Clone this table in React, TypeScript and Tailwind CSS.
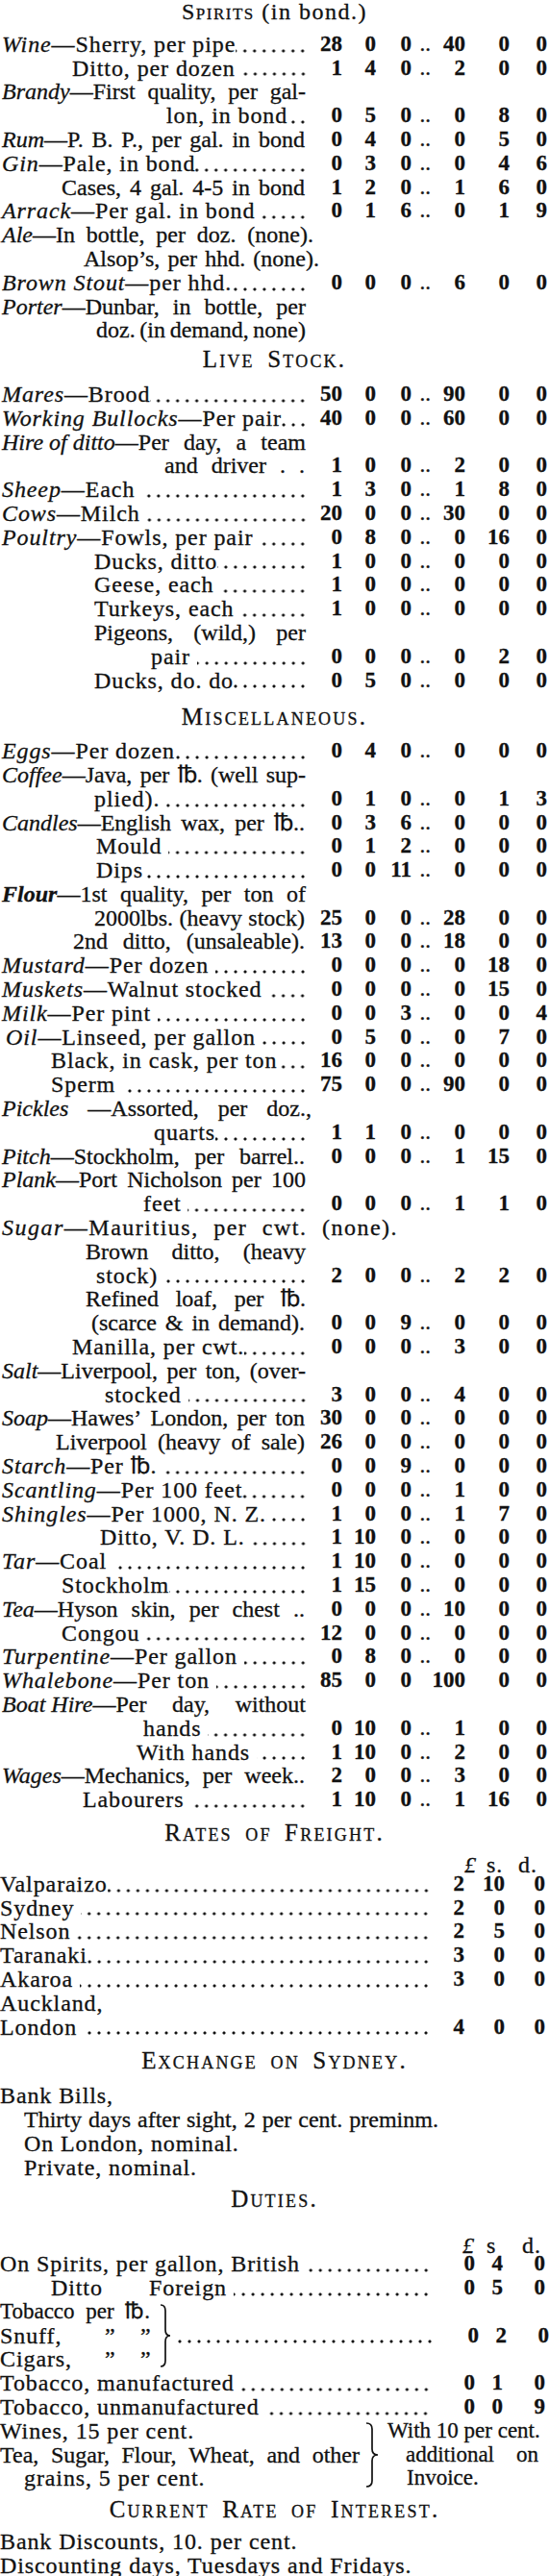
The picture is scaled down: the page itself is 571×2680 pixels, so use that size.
import React from "react";

type R = {
  k: "n" | "j" | "p";
  h?: string;
  t: string;
  ind?: string;
  w?: string;
  lead?: boolean;
  n?: string[];
  nosep?: boolean;
  bi?: boolean;
};

const spirits: R[] = [
  { k: "n", h: "Wine", t: "—Sherry, per pipe", lead: true, n: ["28", "0", "0", "40", "0", "0"] },
  { k: "n", ind: "pl-[75px]", t: "Ditto, per dozen ", lead: true, n: ["1", "4", "0", "2", "0", "0"] },
  { k: "j", h: "Brandy", t: "—First quality, per gal-" },
  { k: "n", ind: "pl-[173px]", t: "lon, in bond", lead: true, n: ["0", "5", "0", "0", "8", "0"] },
  { k: "n", h: "Rum", t: "—P. B. P., per gal. in bond", n: ["0", "4", "0", "0", "5", "0"] },
  { k: "n", h: "Gin", t: "—Pale, in bond", lead: true, n: ["0", "3", "0", "0", "4", "6"] },
  { k: "n", ind: "pl-[64px]", t: "Cases, 4 gal. 4-5 in bond", n: ["1", "2", "0", "1", "6", "0"] },
  { k: "n", h: "Arrack", t: "—Per gal. in bond ", lead: true, n: ["0", "1", "6", "0", "1", "9"] },
  { k: "j", h: "Ale", t: "—In bottle, per doz. (none).", w: "w-[326px]" },
  { k: "j", ind: "pl-[87px]", t: "Alsop’s, per hhd. (none).", w: "w-[332px]" },
  { k: "n", h: "Brown Stout", t: "—per hhd.", lead: true, n: ["0", "0", "0", "6", "0", "0"] },
  { k: "j", h: "Porter", t: "—Dunbar, in bottle, per" },
  { k: "j", ind: "pl-[100px]", t: "doz. (in demand, none)" },
];

const stock: R[] = [
  { k: "n", h: "Mares", t: "—Brood", lead: true, n: ["50", "0", "0", "90", "0", "0"] },
  { k: "n", h: "Working Bullocks", t: "—Per pair", lead: true, n: ["40", "0", "0", "60", "0", "0"] },
  { k: "j", h: "Hire of ditto", t: "—Per day, a team" },
  { k: "n", ind: "pl-[171px]", t: "and driver  . .", n: ["1", "0", "0", "2", "0", "0"] },
  { k: "n", h: "Sheep", t: "—Each ", lead: true, n: ["1", "3", "0", "1", "8", "0"] },
  { k: "n", h: "Cows", t: "—Milch ", lead: true, n: ["20", "0", "0", "30", "0", "0"] },
  { k: "n", h: "Poultry", t: "—Fowls, per pair ", lead: true, n: ["0", "8", "0", "0", "16", "0"] },
  { k: "n", ind: "pl-[98px]", t: "Ducks, ditto", lead: true, n: ["1", "0", "0", "0", "0", "0"] },
  { k: "n", ind: "pl-[98px]", t: "Geese, each ", lead: true, n: ["1", "0", "0", "0", "0", "0"] },
  { k: "n", ind: "pl-[98px]", t: "Turkeys, each ", lead: true, n: ["1", "0", "0", "0", "0", "0"] },
  { k: "j", ind: "pl-[98px]", t: "Pigeons, (wild,) per" },
  { k: "n", ind: "pl-[157px]", t: "pair ", lead: true, n: ["0", "0", "0", "0", "2", "0"] },
  { k: "n", ind: "pl-[98px]", t: "Ducks, do. do", lead: true, n: ["0", "5", "0", "0", "0", "0"] },
];

const misc: R[] = [
  { k: "n", h: "Eggs", t: "—Per dozen", lead: true, n: ["0", "4", "0", "0", "0", "0"] },
  { k: "j", h: "Coffee", t: "—Java, per ℔. (well sup-" },
  { k: "n", ind: "pl-[98px]", t: "plied). ", lead: true, n: ["0", "1", "0", "0", "1", "3"] },
  { k: "n", h: "Candles", t: "—English wax, per ℔..", n: ["0", "3", "6", "0", "0", "0"] },
  { k: "n", ind: "pl-[100px]", t: "Mould ", lead: true, n: ["0", "1", "2", "0", "0", "0"] },
  { k: "n", ind: "pl-[100px]", t: "Dips", lead: true, n: ["0", "0", "11", "0", "0", "0"] },
  { k: "j", h: "Flour", bi: true, t: "—1st quality, per ton of" },
  { k: "n", ind: "pl-[98px]", t: "2000lbs. (heavy stock)", n: ["25", "0", "0", "28", "0", "0"] },
  { k: "n", ind: "pl-[76px]", t: "2nd ditto, (unsaleable).", n: ["13", "0", "0", "18", "0", "0"] },
  { k: "n", h: "Mustard", t: "—Per dozen ", lead: true, n: ["0", "0", "0", "0", "18", "0"] },
  { k: "n", h: "Muskets", t: "—Walnut stocked ", lead: true, n: ["0", "0", "0", "0", "15", "0"] },
  { k: "n", h: "Milk", t: "—Per pint ", lead: true, n: ["0", "0", "3", "0", "0", "4"] },
  { k: "n", ind: "pl-[6px]", h: "Oil", t: "—Linseed, per gallon ", lead: true, n: ["0", "5", "0", "0", "7", "0"] },
  { k: "n", ind: "pl-[53px]", t: "Black, in cask, per ton", lead: true, n: ["16", "0", "0", "0", "0", "0"] },
  { k: "n", ind: "pl-[53px]", t: "Sperm ", lead: true, n: ["75", "0", "0", "90", "0", "0"] },
  { k: "j", h: "Pickles", t: " —Assorted, per doz.,", w: "w-[324px]" },
  { k: "n", ind: "pl-[160px]", t: "quarts", lead: true, n: ["1", "1", "0", "0", "0", "0"] },
  { k: "n", h: "Pitch", t: "—Stockholm, per barrel..", n: ["0", "0", "0", "1", "15", "0"] },
  { k: "j", h: "Plank", t: "—Port Nicholson per 100" },
  { k: "n", ind: "pl-[149px]", t: "feet ", lead: true, n: ["0", "0", "0", "1", "1", "0"] },
  { k: "p", h: "Sugar", t: "—Mauritius, per cwt. (none).", ind: "pl-[2px] tracking-[1.5px] [word-spacing:8px]" },
  { k: "j", ind: "pl-[89px]", t: "Brown ditto, (heavy" },
  { k: "n", ind: "pl-[100px]", t: "stock) ", lead: true, n: ["2", "0", "0", "2", "2", "0"] },
  { k: "j", ind: "pl-[89px]", t: "Refined loaf, per ℔." },
  { k: "n", ind: "pl-[95px]", t: "(scarce & in demand).", n: ["0", "0", "9", "0", "0", "0"] },
  { k: "n", ind: "pl-[75px]", t: "Manilla, per cwt.", lead: true, n: ["0", "0", "0", "3", "0", "0"] },
  { k: "j", h: "Salt", t: "—Liverpool, per ton, (over-" },
  { k: "n", ind: "pl-[109px]", t: "stocked ", lead: true, n: ["3", "0", "0", "4", "0", "0"] },
  { k: "n", h: "Soap", t: "—Hawes’ London, per ton", n: ["30", "0", "0", "0", "0", "0"] },
  { k: "n", ind: "pl-[58px]", t: "Liverpool (heavy of sale)", n: ["26", "0", "0", "0", "0", "0"] },
  { k: "n", h: "Starch", t: "—Per ℔. ", lead: true, n: ["0", "0", "9", "0", "0", "0"] },
  { k: "n", h: "Scantling", t: "—Per 100 feet", lead: true, n: ["0", "0", "0", "1", "0", "0"] },
  { k: "n", h: "Shingles", t: "—Per 1000, N. Z.", lead: true, n: ["1", "0", "0", "1", "7", "0"] },
  { k: "n", ind: "pl-[104px]", t: "Ditto, V. D. L. ", lead: true, n: ["1", "10", "0", "0", "0", "0"] },
  { k: "n", h: "Tar", t: "—Coal ", lead: true, n: ["1", "10", "0", "0", "0", "0"] },
  { k: "n", ind: "pl-[64px]", t: "Stockholm", lead: true, n: ["1", "15", "0", "0", "0", "0"] },
  { k: "n", h: "Tea", t: "—Hyson skin, per chest ..", n: ["0", "0", "0", "10", "0", "0"] },
  { k: "n", ind: "pl-[64px]", t: "Congou ", lead: true, n: ["12", "0", "0", "0", "0", "0"] },
  { k: "n", h: "Turpentine", t: "—Per gallon ", lead: true, n: ["0", "8", "0", "0", "0", "0"] },
  { k: "n", h: "Whalebone", t: "—Per ton ", lead: true, nosep: true, n: ["85", "0", "0", "100", "0", "0"] },
  { k: "j", h: "Boat Hire", t: "—Per day, without" },
  { k: "n", ind: "pl-[149px]", t: "hands ", lead: true, n: ["0", "10", "0", "1", "0", "0"] },
  { k: "n", ind: "pl-[142px]", t: "With hands ", lead: true, n: ["1", "10", "0", "2", "0", "0"] },
  { k: "n", h: "Wages", t: "—Mechanics, per week..", n: ["2", "0", "0", "3", "0", "0"] },
  { k: "n", ind: "pl-[86px]", t: "Labourers ", lead: true, n: ["1", "10", "0", "1", "16", "0"] },
];

const freight: [string, string[] | null][] = [
  ["Valparaizo", ["2", "10", "0"]],
  ["Sydney ", ["2", "0", "0"]],
  ["Nelson ", ["2", "5", "0"]],
  ["Taranaki", ["3", "0", "0"]],
  ["Akaroa ", ["3", "0", "0"]],
  ["Auckland,", null],
  ["London ", ["4", "0", "0"]],
];

const FW = ["w-[35px]", "w-[42px]", "w-[42px]"];
const DW = ["w-[46px]", "w-[29px]", "w-[44px]"];

// dotted leader, drawn as a repeated dot so it always ends flush at the column
function Leader() {
  return (
    <span className="min-w-0 flex-1 bg-[radial-gradient(circle,#111_1.3px,transparent_1.8px)] bg-[length:10px_6px] bg-[position:right_bottom_3px] bg-repeat-x" />
  );
}

function Words({ h, t, bi, className }: { h?: string; t: string; bi?: boolean; className: string }) {
  const sep = t.startsWith(" ");
  const words = t.trim().split(/\s+/);
  const head = h ? <i className={bi ? "font-bold" : ""}>{h}</i> : null;
  const items: React.ReactNode[] = [];
  if (head && sep)
    items.push(
      <span key="h" className="shrink-0">
        {head}
      </span>
    );
  words.forEach((w, i) =>
    items.push(
      <span key={i} className="shrink-0">
        {i === 0 && !sep ? head : null}
        {w}
      </span>
    )
  );
  return <div className={`flex justify-between whitespace-nowrap tracking-normal ${className}`}>{items}</div>;
}

function Nums({ n, nosep }: { n: string[]; nosep?: boolean }) {
  return (
    <div className="flex shrink-0 text-[23px] font-bold tracking-normal">
      <span className="w-[36px] text-right">{n[0]}</span>
      <span className="w-[35px] text-right">{n[1]}</span>
      <span className="w-[37px] text-right">{n[2]}</span>
      <span className="w-[20px] text-right font-normal">{nosep ? "" : ".."}</span>
      <span className="w-[36px] text-right">{n[3]}</span>
      <span className="w-[46px] text-right">{n[4]}</span>
      <span className="w-[39px] text-right">{n[5]}</span>
    </div>
  );
}

function Three({ n, w }: { n: string[]; w: string[] }) {
  return (
    <div className="flex shrink-0 text-[23px] font-bold tracking-normal">
      <span className={`${w[0]} text-right`}>{n[0]}</span>
      <span className={`${w[1]} text-right`}>{n[1]}</span>
      <span className={`${w[2]} text-right`}>{n[2]}</span>
    </div>
  );
}

function PriceRow({ r }: { r: R }) {
  const ind = r.ind ?? "pl-[2px]";
  if (r.k === "j") {
    return (
      <div className={`flex h-[24.8px] ${r.w ?? "w-[318px]"} ${ind}`}>
        <Words h={r.h} t={r.t} bi={r.bi} className="flex-1" />
      </div>
    );
  }
  if (r.k === "p") {
    return (
      <div className={`h-[24.8px] whitespace-nowrap ${ind}`}>
        {r.h && <i>{r.h}</i>}
        {r.t}
      </div>
    );
  }
  return (
    <div className="flex h-[24.8px] whitespace-nowrap">
      <div className={`flex w-[320px] shrink-0 ${ind}`}>
        {r.lead ? (
          <>
            <span className="shrink-0 whitespace-pre">
              {r.h && <i>{r.h}</i>}
              {r.t}
            </span>
            <Leader />
          </>
        ) : (
          <Words h={r.h} t={r.t} className="mr-[3px] flex-1" />
        )}
      </div>
      <Nums n={r.n ?? []} nosep={r.nosep} />
    </div>
  );
}

function Head({ children, className }: { children: React.ReactNode; className: string }) {
  return (
    <div className={`h-[24.8px] text-center text-[25px] tracking-[2.2px] [word-spacing:5px] [font-variant-caps:small-caps] ${className}`}>
      {children}
    </div>
  );
}

function Brace({ h, w = 12 }: { h: number; w?: number }) {
  const m = h / 2;
  const c = w / 2;
  return (
    <svg width={w} height={h} viewBox={`0 0 ${w} ${h}`} className="shrink-0">
      <path
        d={`M1 1 Q${c} 1 ${c} 7 L${c} ${m - 6} Q${c} ${m} ${w - 1} ${m} Q${c} ${m} ${c} ${m + 6} L${c} ${h - 7} Q${c} ${h - 1} 1 ${h - 1}`}
        fill="none"
        stroke="#111"
        strokeWidth="1.7"
      />
    </svg>
  );
}

function LRow({ label, n, w }: { label: React.ReactNode; n: string[]; w: string[] }) {
  return (
    <div className="flex h-[24.8px] whitespace-nowrap">
      <div className="flex w-[448px] shrink-0">
        <span className="shrink-0 whitespace-pre">{label}</span>
        <Leader />
      </div>
      <Three n={n} w={w} />
    </div>
  );
}

export default function App() {
  return (
    <div className="h-[2680px] w-[571px] overflow-hidden bg-white font-['Liberation_Serif','DejaVu_Serif',serif] text-[24px] leading-[24.8px] tracking-[0.9px] text-[#111] [-webkit-text-stroke:0.3px_#111]">
      <div className="mb-[9px] h-[24.8px] text-center tracking-[1.5px]">
        <span className="[font-variant-caps:small-caps]">Spirits</span> (in bond.)
      </div>
      {spirits.map((r, i) => (
        <PriceRow key={"s" + i} r={r} />
      ))}

      <Head className="mb-[11px] mt-[6px]">Live Stock.</Head>
      {stock.map((r, i) => (
        <PriceRow key={"l" + i} r={r} />
      ))}

      <Head className="mb-[10px] mt-[14px]">Miscellaneous.</Head>
      {misc.map((r, i) => (
        <PriceRow key={"m" + i} r={r} />
      ))}

      <Head className="mb-[12px] mt-[10px]">Rates of Freight.</Head>
      <div className="flex h-[16px] pl-[483px] leading-[16px]">
        <i className="w-[23px]">£</i>
        <span className="w-[33px]">s.</span>
        <span>d.</span>
      </div>
      {freight.map(([l, n]) =>
        n ? (
          <LRow key={l} label={l} n={n} w={FW} />
        ) : (
          <div key={l} className="h-[24.8px]">
            {l}
          </div>
        )
      )}

      <Head className="mb-[11px] mt-[11px]">Exchange on Sydney.</Head>
      <div className="h-[24.8px]">Bank Bills,</div>
      <div className="flex h-[24.8px] w-[456px] pl-[25px]">
        <Words t="Thirty days after sight, 2 per cent. preminm." className="flex-1" />
      </div>
      <div className="h-[24.8px] pl-[25px]">On London, nominal.</div>
      <div className="h-[24.8px] pl-[25px]">Private, nominal.</div>

      <Head className="mb-[28px] mt-[9px]">Duties.</Head>
      <div className="flex h-[14px] pl-[481px] leading-[14px]">
        <i className="w-[25px]">£</i>
        <span className="w-[37px]">s</span>
        <span>d.</span>
      </div>
      <LRow label="On Spirits, per gallon, British " n={["0", "4", "0"]} w={DW} />
      <LRow
        label={
          <span className="flex">
            <span className="w-[155px] pl-[53px]">Ditto</span>
            <span>Foreign </span>
          </span>
        }
        n={["0", "5", "0"]}
        w={DW}
      />
      <div className="flex h-[74.4px] whitespace-nowrap">
        <div className="w-[166px] shrink-0">
          <div className="flex h-[24.8px] w-[156px] justify-between text-[23px] tracking-normal">
            <span>Tobacco</span>
            <span>per</span>
            <span>℔.</span>
          </div>
          <div className="flex h-[24.8px]">
            <span className="w-[109px]">Snuff,</span>
            <span className="w-[37px]">”</span>
            <span>”</span>
          </div>
          <div className="flex h-[24.8px]">
            <span className="w-[109px]">Cigars,</span>
            <span className="w-[37px]">”</span>
            <span>”</span>
          </div>
        </div>
        <div className="flex items-center">
          <Brace h={66} />
        </div>
        <div className="flex flex-1 items-center">
          <div className="ml-[4px] flex h-[24.8px] flex-1">
            <Leader />
          </div>
          <Three n={["0", "2", "0"]} w={DW} />
        </div>
      </div>
      <LRow label="Tobacco, manufactured " n={["0", "1", "0"]} w={DW} />
      <LRow label="Tobacco, unmanufactured " n={["0", "0", "9"]} w={DW} />
      <div className="flex h-[74.4px] whitespace-nowrap">
        <div className="w-[380px] shrink-0">
          <div className="h-[24.8px]">Wines, 15 per cent.</div>
          <div className="flex h-[24.8px] w-[374px]">
            <Words t="Tea, Sugar, Flour, Wheat, and other" className="flex-1" />
          </div>
          <div className="h-[24.8px] pl-[25px]">grains, 5 per cent.</div>
        </div>
        <div className="flex items-center">
          <Brace h={68} w={14} />
        </div>
        <div className="pl-[9px] text-[23px] tracking-normal">
          <div className="h-[24.8px]">With 10 per cent.</div>
          <div className="flex h-[24.8px] w-[157px] justify-between pl-[19px]">
            <span>additional</span>
            <span>on</span>
          </div>
          <div className="h-[24.8px] pl-[20px]">Invoice.</div>
        </div>
      </div>

      <Head className="mb-[8px] mt-[8px]">Current Rate of Interest.</Head>
      <div className="h-[24.8px]">Bank Discounts, 10. per cent.</div>
      <div className="h-[24.8px] whitespace-nowrap">Discounting days, Tuesdays and Fridays.</div>
    </div>
  );
}
